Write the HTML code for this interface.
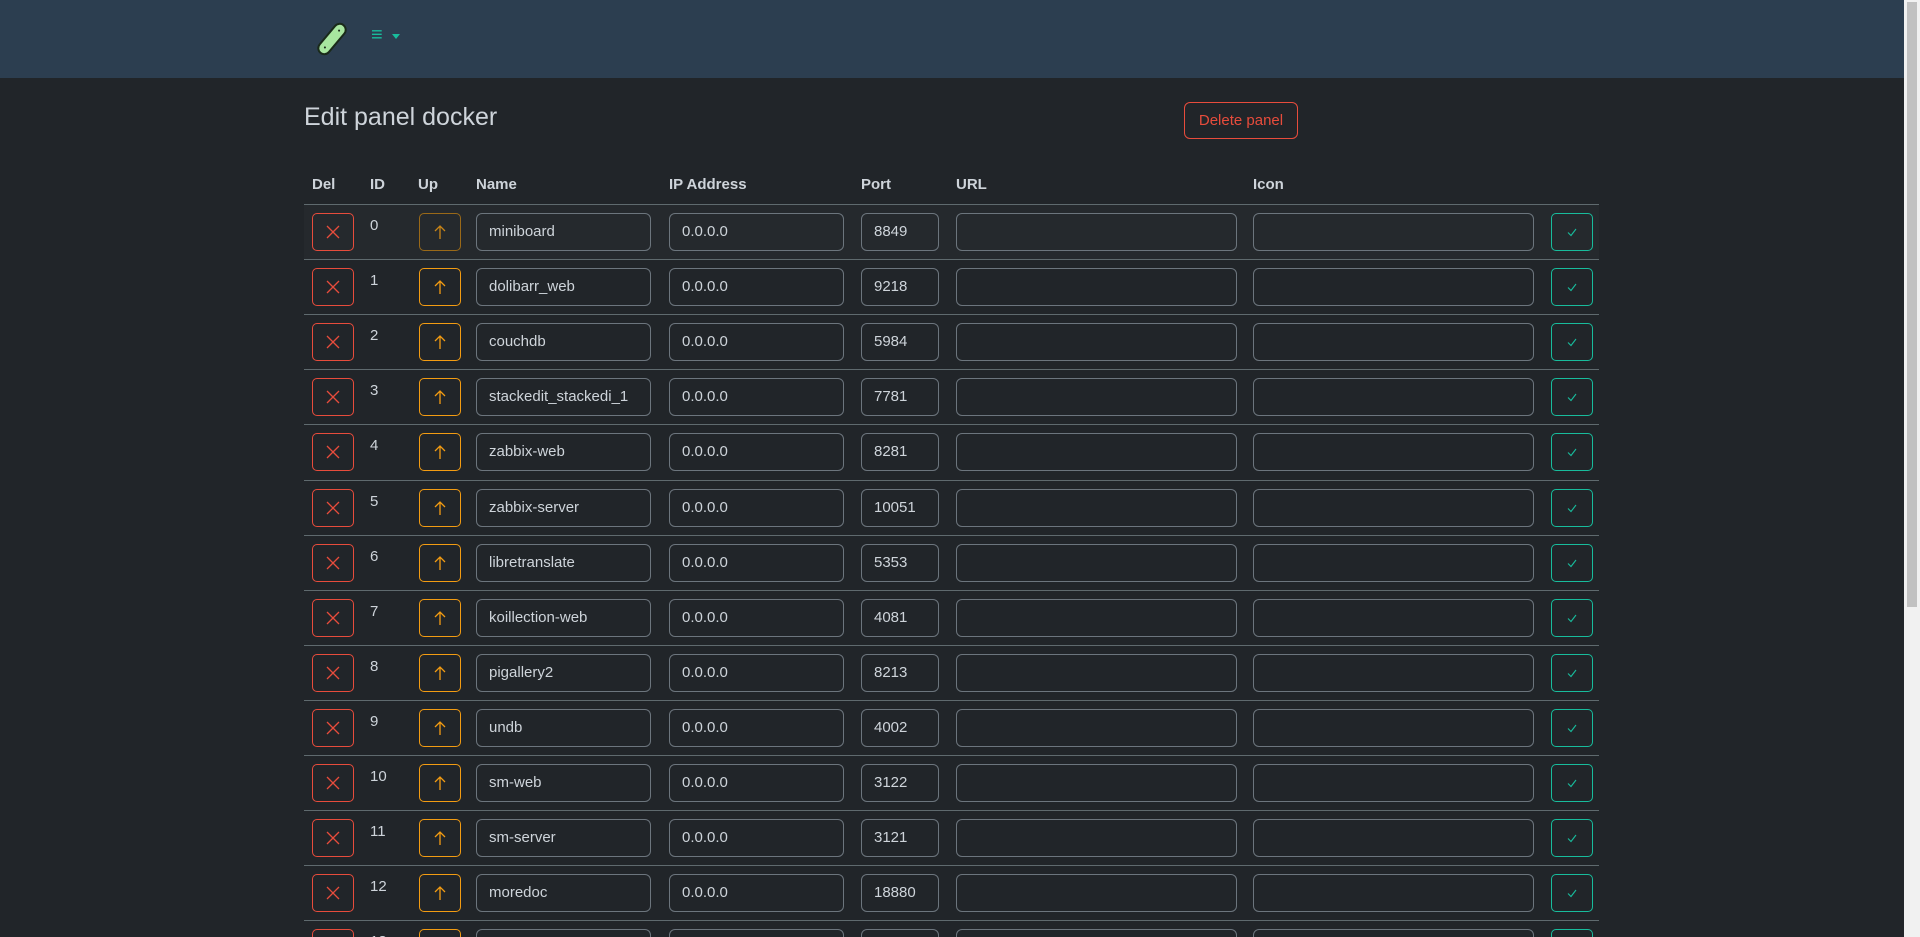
<!DOCTYPE html>
<html style="height:937px;overflow:hidden"><head><meta charset="utf-8">
<style>
*{box-sizing:border-box;margin:0;padding:0}
body{width:1920px;height:937px;overflow:hidden;background:#212529;font-family:"Liberation Sans",sans-serif;color:#dee2e6;position:relative}
#w{position:absolute;left:0;top:0;width:1920px;height:937px;overflow:hidden}
.nav{position:absolute;left:0;top:0;width:1904px;height:78px;background:#2c3e50}
.sb{position:absolute;right:0;top:0;width:16px;height:937px;background:#f1f1f1}
.sb div{position:absolute;left:3px;top:2px;width:10px;height:605px;background:#c1c1c1}
h1{position:absolute;left:304px;top:103px;font-size:25px;font-weight:normal;color:#ced4da}
.del{position:absolute;left:1184px;top:102px;width:114px;height:37px;border:1px solid #e74c3c;border-radius:6px;color:#e74c3c;font-size:15px;text-align:center;line-height:35px}
.hd{position:absolute;top:176px;font-weight:bold;font-size:15px;color:#ced4da}
.row{position:absolute;left:304px;width:1295px;height:55px;border-top:1px solid #5f6a6e}
.b{position:absolute;top:8px;width:42px;height:38px;border:1px solid;border-radius:5px}
.b svg{position:absolute;left:12px;top:10px}
.x{left:8px;border-color:#e74c3c}
.u{left:115px;border-color:#f39c12}
.c{left:1247px;border-color:#18bc9c}
.id{position:absolute;left:66px;top:12px;font-size:15px;color:#ced4da}
.i{position:absolute;top:8px;height:38px;border:1px solid #6c757d;border-radius:6px;font-size:15px;line-height:36px;padding-left:12px;color:#ced4da}
.n{left:172px;width:175px}.ip{left:365px;width:175px}.p{left:557px;width:78px}.url{left:652px;width:281px}.ic{left:949px;width:281px}
</style></head><body><div id="w">
<div class="nav">
<svg style="position:absolute;left:314px;top:20px" width="36" height="38" viewBox="0 0 36 38"><g transform="rotate(40 18 19)"><rect x="12" y="1" width="12" height="36" rx="6" fill="#a8e6a0" stroke="#1a2a1a" stroke-width="2"/><circle cx="18" cy="8" r="1" fill="#1a2a1a"/><circle cx="18" cy="30" r="1" fill="#1a2a1a"/></g></svg>
<div style="position:absolute;left:371px;top:24px;color:#18bc9c;font-size:20px">≡</div>
<div style="position:absolute;left:392px;top:34px;width:0;height:0;border-left:4px solid transparent;border-right:4px solid transparent;border-top:5px solid #18bc9c"></div>
</div>
<div class="sb"><div></div></div>
<h1>Edit panel docker</h1>
<div class="del">Delete panel</div>
<div class="hd" style="left:312px">Del</div><div class="hd" style="left:370px">ID</div><div class="hd" style="left:418px">Up</div><div class="hd" style="left:476px">Name</div><div class="hd" style="left:669px">IP Address</div><div class="hd" style="left:861px">Port</div><div class="hd" style="left:956px">URL</div><div class="hd" style="left:1253px">Icon</div>
<svg width="0" height="0" style="position:absolute"><defs>
<symbol id="sx" viewBox="0 0 16 16"><path d="M2 2L14 14M14 2L2 14" stroke="#e74c3c" stroke-width="1.3" fill="none"/></symbol>
<symbol id="su" viewBox="0 0 16 16"><path d="M8 15V2M3 7L8 2L13 7" stroke="#f39c12" stroke-width="1.3" fill="none"/></symbol>
<symbol id="sc" viewBox="0 0 16 16"><path d="M4 8.5L7 11.5L12 5" stroke="#18bc9c" stroke-width="1.1" fill="none"/></symbol>
</defs></svg>
<div id="rows"></div>
</div>
<script>
var d=[["0","miniboard","0.0.0.0","8849"],["1","dolibarr_web","0.0.0.0","9218"],["2","couchdb","0.0.0.0","5984"],["3","stackedit_stackedi_1","0.0.0.0","7781"],["4","zabbix-web","0.0.0.0","8281"],["5","zabbix-server","0.0.0.0","10051"],["6","libretranslate","0.0.0.0","5353"],["7","koillection-web","0.0.0.0","4081"],["8","pigallery2","0.0.0.0","8213"],["9","undb","0.0.0.0","4002"],["10","sm-web","0.0.0.0","3122"],["11","sm-server","0.0.0.0","3121"],["12","moredoc","0.0.0.0","18880"],["13","","",""]];
var h="";d.forEach(function(r,k){h+='<div class="row" style="top:'+Math.round(204+55.1*k)+'px'+(k==0?';background:#25292d':'')+'"><div class="b x"><svg width="16" height="16"><use href="#sx"/></svg></div><div class="id">'+r[0]+'</div><div class="b u"'+(k==0?' style="border-color:#b87a14;opacity:.8"':'')+'><svg width="16" height="16"><use href="#su"/></svg></div><div class="i n">'+r[1]+'</div><div class="i ip">'+r[2]+'</div><div class="i p">'+r[3]+'</div><div class="i url"></div><div class="i ic"></div><div class="b c"><svg width="16" height="16"><use href="#sc"/></svg></div></div>';});
document.getElementById("rows").innerHTML=h;
</script>
</body></html>
